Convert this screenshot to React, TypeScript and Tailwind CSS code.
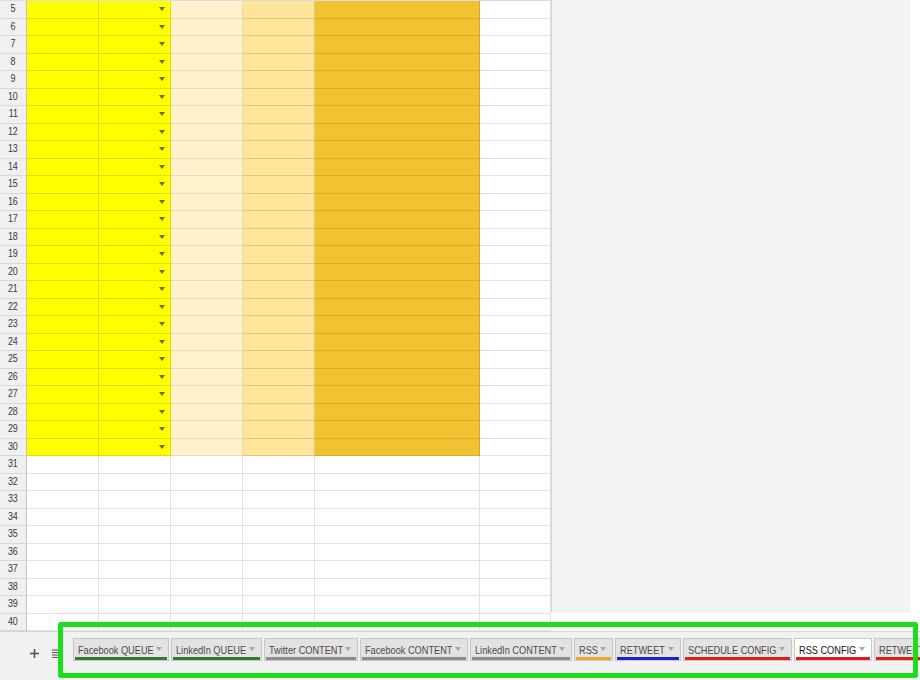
import React from "react";

const rows = Array.from({ length: 36 }, (_, i) => i + 5);

const tabs = [
  { label: "Facebook QUEUE", w: "w-[96px]", c: "bg-[#2f7a2c]" },
  { label: "LinkedIn QUEUE", w: "w-[91px]", c: "bg-[#2f7a2c]" },
  { label: "Twitter CONTENT", w: "w-[94px]", c: "bg-[#8c8c8c]" },
  { label: "Facebook CONTENT", w: "w-[108px]", c: "bg-[#8c8c8c]" },
  { label: "LinkedIn CONTENT", w: "w-[102px]", c: "bg-[#8c8c8c]" },
  { label: "RSS", w: "w-[39px]", c: "bg-[#f0a530]" },
  { label: "RETWEET", w: "w-[66px]", c: "bg-[#1c22c4]" },
  { label: "SCHEDULE CONFIG", w: "w-[109px]", c: "bg-[#dd1c1c]" },
  { label: "RSS CONFIG", w: "w-[78px]", c: "bg-[#dd1c1c]", active: true },
  { label: "RETWEET", w: "w-[80px]", c: "bg-[#dd1c1c]" },
];

function Caret({ cls }: { cls: string }) {
  return (
    <svg width="6" height="4" viewBox="0 0 6 4" className={cls}>
      <polygon points="0,0 6,0 3,4" />
    </svg>
  );
}

function Row({ n }: { n: number }) {
  const colored = n <= 30;
  return (
    <div className="flex h-[17.5px]">
      <div className="w-[27px] shrink-0 bg-[#f0f0f0] border-r border-b border-r-[#c4c4c4] border-b-[#d8d8d8] flex items-center justify-center text-[10.5px] text-[#3a3a3a]">
        <span className="inline-block scale-x-[0.85]">{n}</span>
      </div>
      {colored ? (
        <>
          <div className="w-[72px] shrink-0 bg-[#ffff00] border-r border-b border-[#e2dc00]" />
          <div className="w-[72px] shrink-0 bg-[#ffff00] border-r border-b border-[#e2dc00] flex items-center justify-end pr-[5px]">
            <Caret cls="fill-[#6e6a1c]" />
          </div>
          <div className="w-[72px] shrink-0 bg-[#fff2cc] border-r border-b border-[#eadbb2]" />
          <div className="w-[72px] shrink-0 bg-[#ffe599] border-r border-b border-[#e3c67c]" />
          <div className="w-[165px] shrink-0 bg-[#f1c232] border-r border-b border-[#d8a92a]" />
        </>
      ) : (
        <>
          <div className="w-[72px] shrink-0 border-r border-b border-[#e2e2e2]" />
          <div className="w-[72px] shrink-0 border-r border-b border-[#e2e2e2]" />
          <div className="w-[72px] shrink-0 border-r border-b border-[#e2e2e2]" />
          <div className="w-[72px] shrink-0 border-r border-b border-[#e2e2e2]" />
          <div className="w-[165px] shrink-0 border-r border-b border-[#e2e2e2]" />
        </>
      )}
      <div className="w-[71px] shrink-0 bg-white border-r border-b border-[#e2e2e2]" />
    </div>
  );
}

export default function App() {
  return (
    <div
      className="relative w-[920px] h-[680px] overflow-hidden bg-white"
      style={{ fontFamily: '"Liberation Sans", Arial, sans-serif' }}
    >
      <div className="flex h-[631px]">
        <div className="w-[551px] shrink-0 border-t border-[#dcdcdc]">
          {rows.map((n) => (
            <Row key={n} n={n} />
          ))}
        </div>
        <div className="flex-1 flex flex-col">
          <div className="flex-1 bg-[#f3f3f3] border-l border-[#d4d4d4] mr-[10px] mb-[19px]" />
        </div>
      </div>
      <div className="h-[49px] bg-[#f1f1f1] border-t border-[#d6d6d6] flex items-start">
        <div className="w-[73px] shrink-0 flex items-center h-[16px] mt-[13px] pl-[30px]">
          <svg width="9" height="9" viewBox="0 0 9 9" className="stroke-[#555]">
            <line x1="4.5" y1="0" x2="4.5" y2="9" strokeWidth="1.6" />
            <line x1="0" y1="4.5" x2="9" y2="4.5" strokeWidth="1.6" />
          </svg>
          <svg width="8" height="9" viewBox="0 0 8 9" className="ml-[13px] stroke-[#666]">
            <line x1="0" y1="1" x2="8" y2="1" strokeWidth="1.2" />
            <line x1="0" y1="3.5" x2="8" y2="3.5" strokeWidth="1.2" />
            <line x1="0" y1="6" x2="8" y2="6" strokeWidth="1.2" />
            <line x1="0" y1="8.5" x2="8" y2="8.5" strokeWidth="1.2" />
          </svg>
        </div>
        <div className="flex gap-[2px] mt-[6px]">
          {tabs.map((t, i) => (
            <div
              key={i}
              className={`${t.w} shrink-0 h-[23px] flex flex-col border border-[#c8c8c8] ${
                t.active ? "bg-white" : "bg-[#e3e3e3]"
              }`}
            >
              <div className="flex-1 flex items-center pt-[2px] pl-[4px] pr-[6px] overflow-hidden whitespace-nowrap">
                <div className="flex-1 min-w-0">
                  <span
                    className={`inline-block origin-left scale-x-[0.8] text-[11.5px] ${
                      t.active ? "text-[#111]" : "text-[#4a4a4a]"
                    }`}
                  >
                    {t.label}
                  </span>
                </div>
                <Caret cls="fill-[#a8a8a8] shrink-0 ml-[3px]" />
              </div>
              <div className={`h-[3px] mx-[1px] ${t.c}`} />
            </div>
          ))}
        </div>
      </div>
      <div className="absolute left-[58px] top-[622px] w-[860px] h-[56px] border-[5px] border-[#1ddb1d] rounded-[3px]" />
    </div>
  );
}
